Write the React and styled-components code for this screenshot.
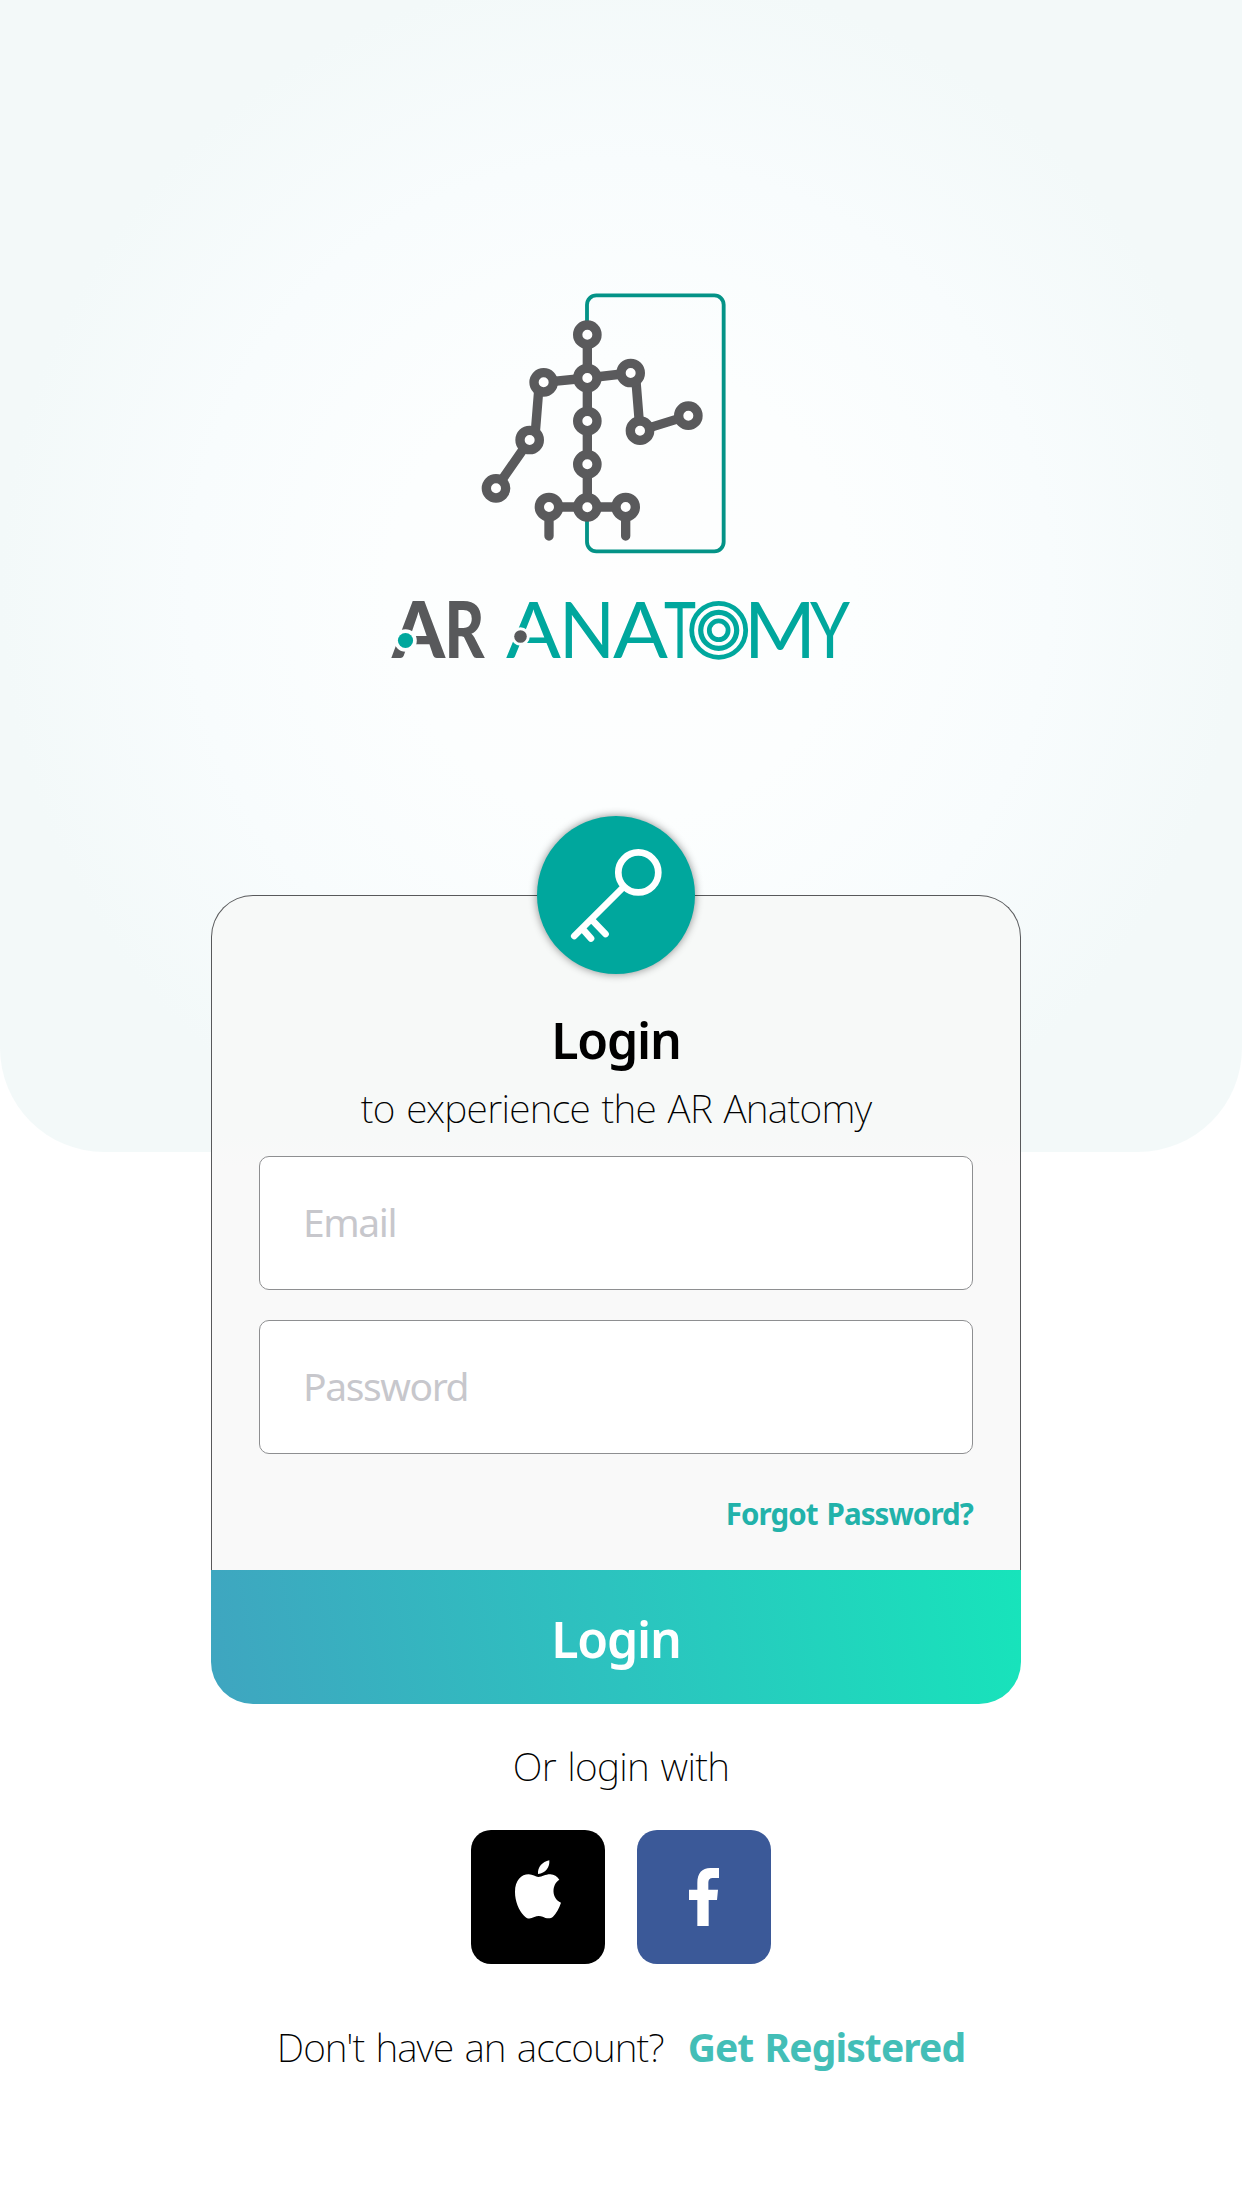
import React from "react";
import styled, { createGlobalStyle } from "styled-components";

const GlobalStyle = createGlobalStyle`
  *, *::before, *::after { box-sizing: border-box; }
  body { margin: 0; background: #fff; font-family: "Noto Sans", "Open Sans", sans-serif; }
`;

const Screen = styled.main`
  display: flex;
  flex-direction: column;
  width: 1242px;
  height: 2208px;
  overflow: hidden;
  background: #fff;
`;

const Hero = styled.header`
  display: flex;
  flex-direction: column;
  align-items: center;
  flex: none;
  height: 1152px;
  padding-top: 280px;
  border-radius: 0 0 104px 104px;
  background: radial-gradient(circle at 620px 590px, #fefefe 0, #fcfefe 230px, #f8fcfd 430px, #f3f9f9 620px);
`;

const Figure = styled.svg`
  display: block;
  width: 290px;
  height: 290px;
  margin-right: 32px;
`;

const Wordmark = styled.svg`
  display: block;
  width: 480px;
  height: 120px;
  margin-right: 2px;
  font-family: Lato, sans-serif;
`;

const Card = styled.section`
  position: relative;
  display: flex;
  flex-direction: column;
  flex: none;
  width: 810px;
  margin: -257px 0 0 211px;
`;

const Panel = styled.div`
  display: flex;
  flex-direction: column;
  height: 675px;
  padding: 114px 47px 0;
  border: 1px solid #58595b;
  border-bottom: 0;
  border-radius: 42px 42px 0 0;
  background: linear-gradient(#f7f9f8 0, #f7f9f8 240px, #f9f9f9 270px);
`;

const Badge = styled.div`
  position: absolute;
  top: -79px;
  left: 326px;
  width: 158px;
  height: 158px;
  border-radius: 50%;
  background: #00a79d;
  box-shadow: 0 0 8px rgba(0, 0, 0, 0.45);

  svg { display: block; width: 158px; height: 158px; }
`;

const Title = styled.h1`
  margin: 0;
  font-size: 50px;
  font-weight: 600;
  line-height: 60px;
  letter-spacing: -1.2px;
  text-align: center;
  color: #000;
`;

const Light = styled.p`
  margin: ${(p) => p.$top || 0}px 0 0;
  font-size: 39px;
  font-weight: 200;
  line-height: 50px;
  letter-spacing: ${(p) => p.$track || 0}px;
  word-spacing: 2px;
  text-align: center;
  white-space: nowrap;
  color: #000;
`;

const Fields = styled.div`
  display: flex;
  flex-direction: column;
  gap: 30px;
  margin-top: 23px;
`;

const Field = styled.input`
  width: 714px;
  height: 134px;
  padding: 0 46px 3px 43px;
  border: 1px solid #8e8f91;
  border-radius: 10px;
  background: #fff;
  font-family: inherit;
  font-size: 39px;
  letter-spacing: -1.4px;

  &::placeholder { color: #c7c7cc; opacity: 1; }
`;

const Forgot = styled.a`
  align-self: flex-end;
  margin-top: 40px;
  font-size: 29.5px;
  font-weight: 700;
  line-height: 40px;
  letter-spacing: -0.9px;
  word-spacing: 2px;
  white-space: nowrap;
  color: #22b2aa;
`;

const Submit = styled.button`
  height: 134px;
  padding: 4px 0 0;
  border: 0;
  border-radius: 0 0 42px 42px;
  background: linear-gradient(80deg, #3fa5c0, #2cc3bf 50%, #17e4bb);
  font-family: inherit;
  font-size: 50px;
  font-weight: 600;
  letter-spacing: -1.2px;
  color: #fff;
`;

const Socials = styled.div`
  display: flex;
  justify-content: center;
  gap: 32px;
  margin-top: 39px;
`;

const Social = styled.button`
  width: 134px;
  height: 134px;
  padding: 0;
  border: 0;
  border-radius: 20px;
  background: ${(p) => p.$bg};

  svg { display: block; width: 134px; height: 134px; }
`;

const Footer = styled.footer`
  display: flex;
  justify-content: center;
  margin-top: 58px;
`;

const Register = styled.a`
  margin-left: 24px;
  font-size: 39px;
  font-weight: 700;
  line-height: 50px;
  letter-spacing: -0.9px;
  word-spacing: 2px;
  white-space: nowrap;
  color: #43beb7;
`;

const joints = [
  [382, 164], [382, 294], [382, 423], [382, 553], [382, 682],
  [251, 307], [209, 480], [108, 625], [512, 279], [540, 452], [685, 407],
  [267, 681], [497, 681],
];

const teal = "#00a79d";
const gray = "#58595b";

// left edge and width of each letter of the wordmark
const letters = [
  ["A", 12, 53, gray, 900],
  ["R", 64.5, 40, gray, 900],
  ["A", 126, 55, teal, 400],
  ["N", 179, 56, teal, 400],
  ["A", 233, 55, teal, 400],
  ["T", 284, 32, teal, 400],
  ["M", 364, 72, teal, 400],
  ["Y", 430, 40, teal, 400],
];

function Logo() {
  return (
    <>
      <Figure viewBox="0 0 870 870" fill="none">
        <rect x="381" y="46" width="410" height="768" rx="28" stroke="#049387" strokeWidth="11.5" />
        <g stroke="#5a5a5c" strokeWidth="28" strokeLinejoin="round">
          <path d="M382 164V682M108 625L209 480" />
          <path d="M224 481L238 307M251 307L382 294L512 279M526 279L540 452L685 407" />
          <path d="M267 768V681H497V768" strokeLinecap="round" />
        </g>
        {joints.map(([x, y]) => (
          <circle key={`${x}-${y}`} cx={x} cy={y} r="29" fill="#fff" stroke="#5a5a5c" strokeWidth="28" />
        ))}
      </Figure>
      <Wordmark viewBox="0 -20 480 120">
        {letters.map(([ch, x, w, color, weight]) => (
          <text key={x} x={x} y="68" fontSize="77.5" fontWeight={weight} fill={color} textLength={w} lengthAdjust="spacingAndGlyphs">
            {ch}
          </text>
        ))}
        <circle cx="25.5" cy="50.5" r="11.3" fill="#fcfefe" />
        <circle cx="25.5" cy="50.5" r="7.6" fill={teal} />
        <circle cx="140.5" cy="46.5" r="9.3" fill="#fcfefe" />
        <circle cx="140.5" cy="46.5" r="6.3" fill={gray} />
        <g fill="none" stroke={teal}>
          <circle cx="338.7" cy="40.3" r="27" strokeWidth="4.8" fill="#fdfefe" />
          <circle cx="338.7" cy="40.3" r="18" strokeWidth="5.2" />
          <circle cx="338.7" cy="40.3" r="9.4" strokeWidth="4.8" />
        </g>
      </Wordmark>
    </>
  );
}

export default function App() {
  return (
    <>
      <GlobalStyle />
      <Screen>
        <Hero>
          <Logo />
        </Hero>
        <Card>
          <Panel>
            <Title>Login</Title>
            <Light $top={13} $track={-0.7}>to experience the AR Anatomy</Light>
            <Fields>
              <Field type="email" placeholder="Email" />
              <Field type="password" placeholder="Password" />
            </Fields>
            <Forgot>Forgot Password?</Forgot>
          </Panel>
          <Submit>Login</Submit>
          <Badge>
            <svg viewBox="537 816 158 158" fill="none" stroke="#fff" strokeWidth="6.7" strokeLinecap="round">
              <circle cx="638.3" cy="872.4" r="20" />
              <path d="M623.5 887L574.3 936M583.5 930L591 938.5M593 921L605.5 934" />
            </svg>
          </Badge>
        </Card>
        <Light $top={37} $track={-0.7}>Or login with</Light>
        <Socials>
          <Social $bg="#000" aria-label="Apple">
            <svg viewBox="33 60 402 402" fill="#fff">
              <path d="M268 151C270 172 256 190 234 192C232 172 247 155 268 151Z" />
              <path d="M235 201C247 201 255 193 271 193C282 193 292 200 298 209C274 224 274 265 303 278C297 296 289 310 279 320C270 329 256 324 248 320C240 317 231 317 223 321C211 327 202 328 192 317C176 300 165 274 165 246C165 211 184 193 206 193C218 193 227 201 235 201Z" />
            </svg>
          </Social>
          <Social $bg="#3b5998" aria-label="Facebook">
            <svg viewBox="531 60 402 402" fill="#fff">
              <path d="M712 348V270H687V239H712V219C712 190 726 174 751 174H777V204H758C749 204 745 209 745 218V239H774L771 270H746V348Z" />
            </svg>
          </Social>
        </Socials>
        <Footer>
          <Light $track={-0.95}>Don't have an account?</Light>
          <Register>Get Registered</Register>
        </Footer>
      </Screen>
    </>
  );
}
